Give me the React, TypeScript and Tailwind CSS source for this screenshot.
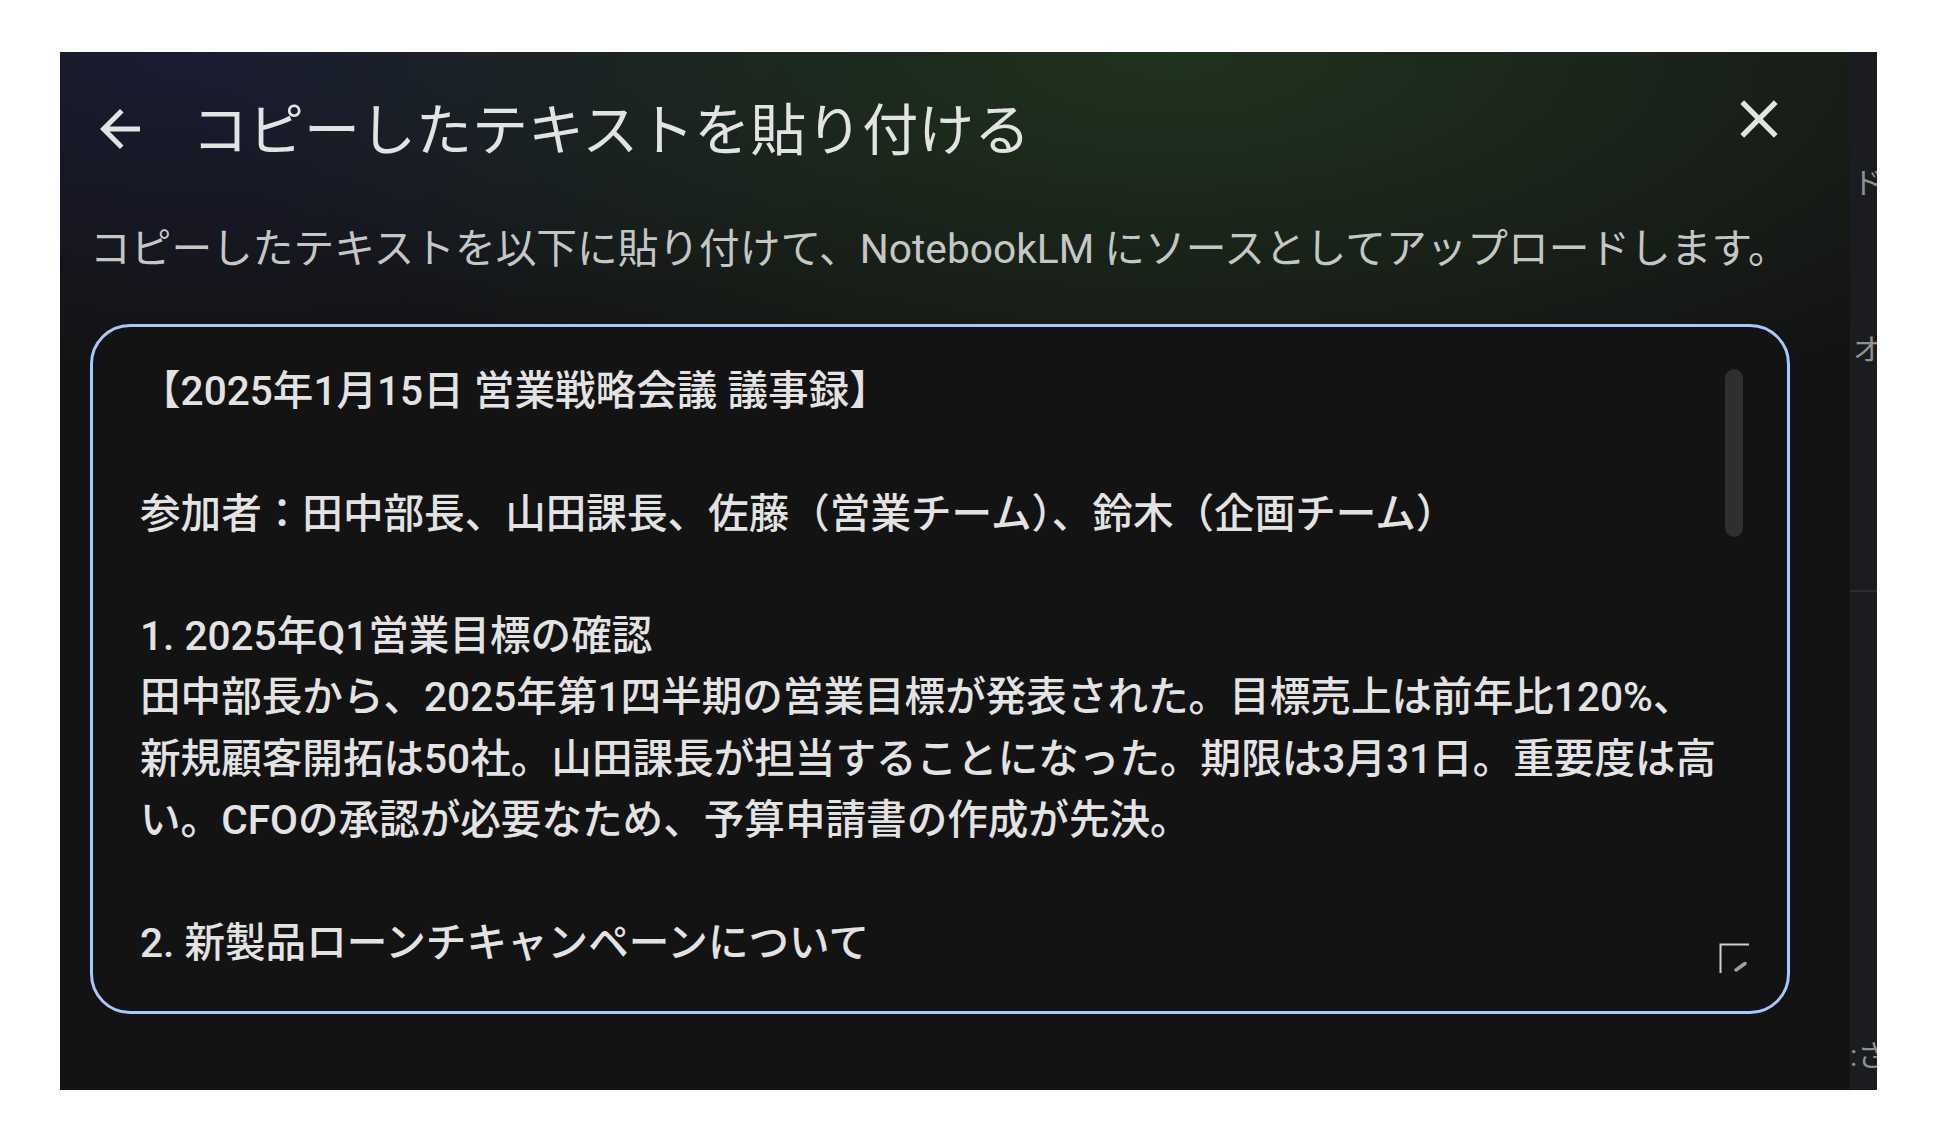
import React from "react"

const lines = [
  "【2025年1月15日 営業戦略会議 議事録】",
  "",
  "参加者：田中部長、山田課長、佐藤（営業チーム）、鈴木（企画チーム）",
  "",
  "1. 2025年Q1営業目標の確認",
  "田中部長から、2025年第1四半期の営業目標が発表された。目標売上は前年比120%、",
  "新規顧客開拓は50社。山田課長が担当することになった。期限は3月31日。重要度は高",
  "い。CFOの承認が必要なため、予算申請書の作成が先決。",
  "",
  "2. 新製品ローンチキャンペーンについて",
]

function BackIcon() {
  return (
    <svg viewBox="0 0 24 24" className="w-[60px] h-[60px] shrink-0" fill="#e3e3e3">
      <path d="M20 11H7.83l5.59-5.59L12 4l-8 8 8 8 1.41-1.41L7.83 13H20v-2z" />
    </svg>
  )
}

function CloseIcon() {
  return (
    <svg viewBox="0 0 24 24" className="w-[64px] h-[64px] shrink-0" fill="#e3e3e3">
      <path d="M19 6.41L17.59 5 12 10.59 6.41 5 5 6.41 10.59 12 5 17.59 6.41 19 12 13.41 17.59 19 19 17.59 13.41 12z" />
    </svg>
  )
}

function ResizeHandle() {
  return (
    <svg viewBox="0 0 30 30" className="w-[30px] h-[30px]">
      <path d="M1.5 30V1.5H30" stroke="#d0d0d0" strokeWidth="2" fill="none" />
      <path d="M17 27L26 20.5" stroke="#a0a0a0" strokeWidth="3.5" strokeLinecap="round" />
    </svg>
  )
}

export default function App() {
  return (
    <div
      className="w-full h-[1140px] bg-white pt-[52px] pl-[60px]"
      style={{ fontFamily: "Roboto, 'Noto Sans CJK JP', sans-serif" }}
    >
      <div className="flex w-[1817px] h-[1038px]">
        {/* dialog */}
        <div className="w-[1790px] h-full bg-[#131314] bg-[radial-gradient(ellipse_55%_38%_at_62%_0%,rgba(36,62,34,0.75),transparent),radial-gradient(ellipse_45%_30%_at_8%_0%,rgba(30,34,70,0.6),transparent)] px-[30px] pt-[35px]">
          <div className="flex items-start">
            <div className="mt-[12px]">
              <BackIcon />
            </div>
            <h1 className="mt-[14px] ml-[42px] text-[56px] leading-[60px] text-[#e3e3e3] font-normal">
              コピーしたテキストを貼り付ける
            </h1>
            <button className="ml-auto mr-[29px]">
              <CloseIcon />
            </button>
          </div>

          <p className="mt-[58px] text-[40.7px] leading-[60px] text-[#c4c7c5] whitespace-nowrap">
            コピーしたテキストを以下に貼り付けて、NotebookLM にソースとしてアップロードします。
          </p>

          <div className="relative mt-[45px] w-[1700px] h-[690px] rounded-[40px] border-[3px] border-[#a8c7fa] bg-[#131314] overflow-hidden">
            <div className="pl-[47px] pt-[34px] text-[40.6px] leading-[61.3px] font-medium text-[#e3e3e3]">
              {lines.map((l, i) => (
                <div key={i} className="whitespace-nowrap h-[61.3px]">
                  {l}
                </div>
              ))}
            </div>
            <div className="absolute left-[1632px] top-[42px] w-[18px] h-[168px] rounded-full bg-[#2f2f31]" />
            <div className="absolute left-[1626px] top-[616px]">
              <ResizeHandle />
            </div>
          </div>
        </div>

        {/* page behind the dialog */}
        <div className="w-[27px] h-full bg-[#1b1c1f] overflow-hidden text-[30px] leading-[36px] text-[#8e918f] flex flex-col">
          <div className="mt-[113px] pl-[3px] whitespace-nowrap">ド</div>
          <div className="mt-[131px] pl-[3px] whitespace-nowrap">オー</div>
          <div className="mt-[222px] h-[2px] bg-[#2c2d30]" />
          <div className="mt-[446px] whitespace-nowrap">:さ</div>
        </div>
      </div>
    </div>
  )
}
